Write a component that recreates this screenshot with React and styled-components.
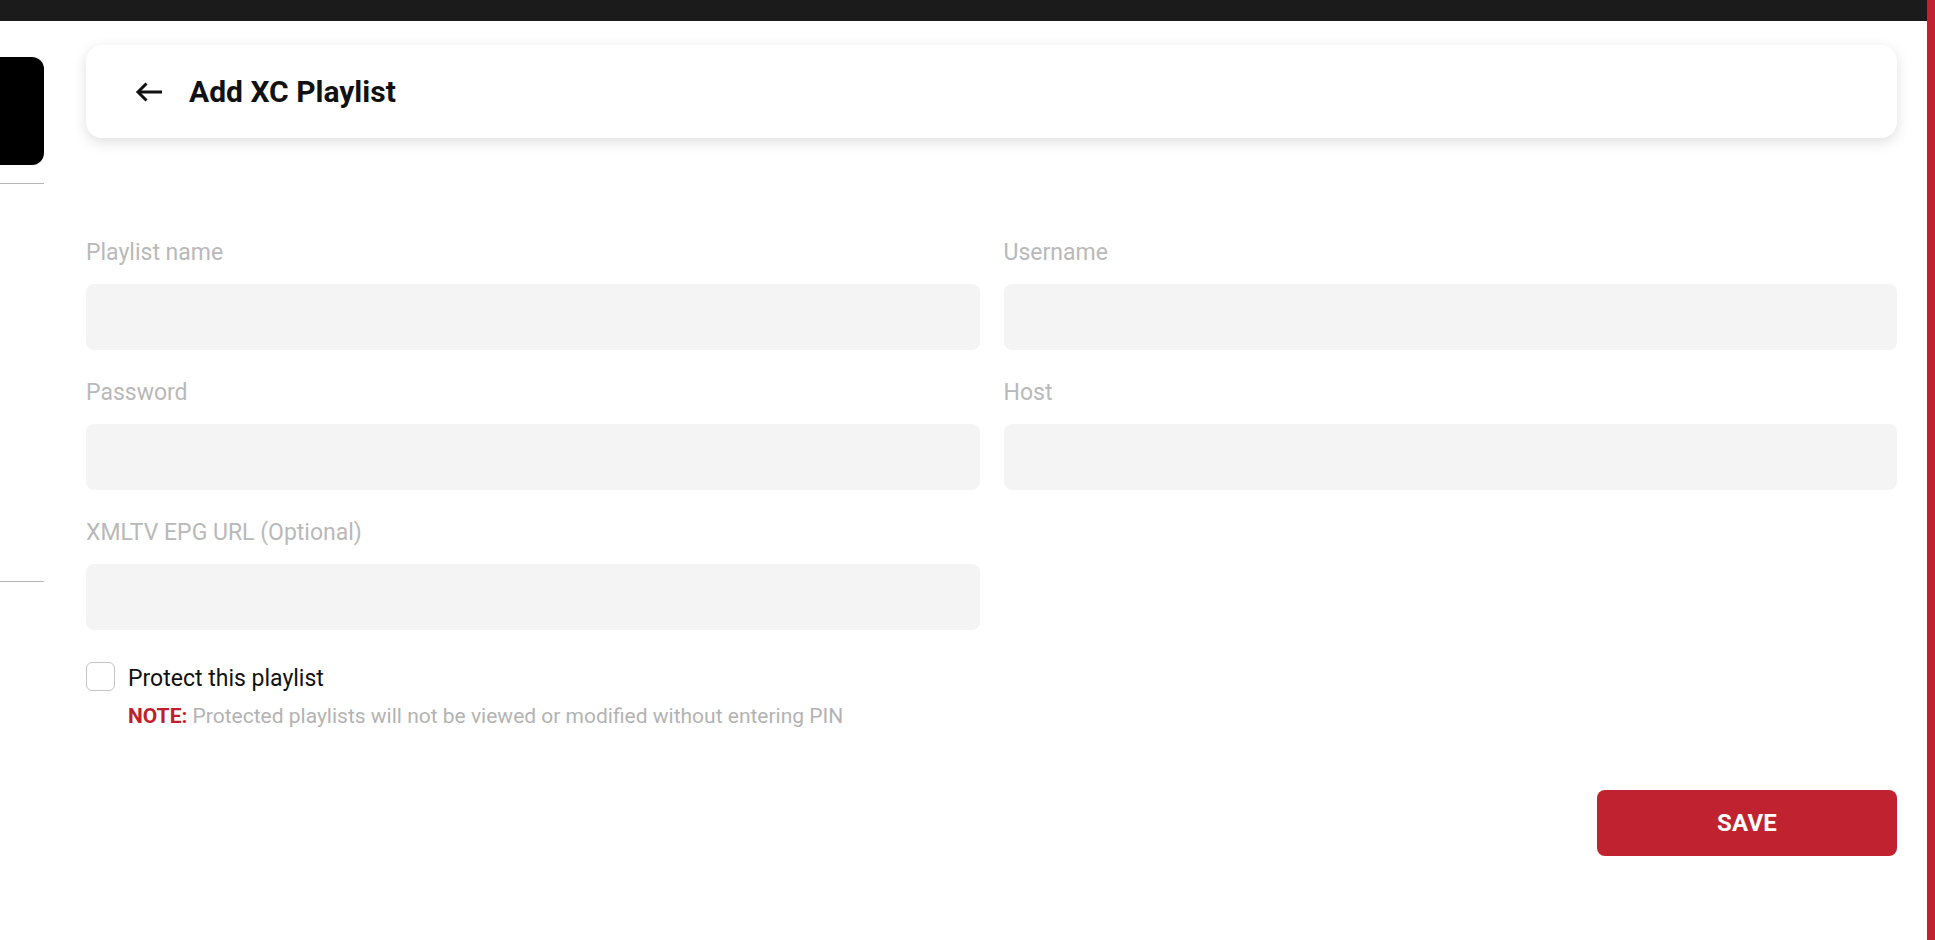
import React from "react";
import styled, { createGlobalStyle } from "styled-components";

const GlobalStyle = createGlobalStyle`
  html, body { margin: 0; padding: 0; background: #ffffff; }
  body { font-family: Roboto, "Liberation Sans", Arial, sans-serif; }
  * { box-sizing: border-box; }
`;

const Page = styled.div`
  display: flex;
  height: 940px;
  width: 1935px;
  overflow: hidden;
`;

const Main = styled.div`
  flex: 1;
  display: flex;
  flex-direction: column;
  min-width: 0;
`;

const RedEdge = styled.div`
  width: 8px;
  flex-shrink: 0;
  background: #c0232f;
`;

const TopBar = styled.div`
  height: 21px;
  flex-shrink: 0;
  background: #1b1b1b;
`;

const Body = styled.div`
  flex: 1;
  display: flex;
  gap: 42px;
  padding-right: 30px;
`;

const Sidebar = styled.aside`
  width: 44px;
  flex-shrink: 0;
  padding-top: 36px;
  display: flex;
  flex-direction: column;
`;

const SideBlock = styled.div`
  height: 108px;
  background: #000;
  border-radius: 0 12px 12px 0;
`;

const SideRule = styled.div`
  height: 1px;
  background: #b5b5b5;
  margin-top: ${(p) => p.$gap}px;
`;

const Content = styled.main`
  flex: 1;
  min-width: 0;
  padding-top: 24px;
  display: flex;
  flex-direction: column;
`;

const HeaderCard = styled.header`
  height: 93px;
  background: #fff;
  border-radius: 16px;
  box-shadow: 0 4px 14px rgba(0, 0, 0, 0.13);
  display: flex;
  align-items: center;
  padding-left: 49px;
  gap: 26px;
`;

const BackButton = styled.button`
  border: 0;
  background: none;
  padding: 0;
  display: flex;
  cursor: pointer;
  color: #111;
`;

const Title = styled.h1`
  margin: 0;
  font-size: 30px;
  font-weight: 700;
  color: #111;
  line-height: 36px;
`;

const Form = styled.form`
  margin-top: 102px;
  display: flex;
  flex-direction: column;
`;

const Grid = styled.div`
  display: grid;
  grid-template-columns: 1fr 1fr;
  column-gap: 24px;
  row-gap: 30px;
`;

const Field = styled.label`
  display: flex;
  flex-direction: column;
`;

const FieldLabel = styled.span`
  font-size: 23px;
  line-height: 26px;
  color: #b9b9b9;
  margin-bottom: 18px;
`;

const Input = styled.input`
  height: 66px;
  border: 0;
  border-radius: 8px;
  background: #f4f4f4;
  padding: 0 18px;
  font-size: 20px;
  font-family: inherit;
  outline: none;
`;

const CheckRow = styled.label`
  margin-top: 31px;
  display: flex;
  align-items: center;
  gap: 13px;
  cursor: pointer;
`;

const CheckBox = styled.span`
  width: 29px;
  height: 29px;
  border: 1px solid #c4c4c4;
  border-radius: 6px;
  background: #fff;
  flex-shrink: 0;
`;

const CheckText = styled.span`
  font-size: 23px;
  line-height: 26px;
  color: #111;
  padding-top: 5px;
`;

const Note = styled.p`
  margin: 12px 0 0 42px;
  font-size: 21px;
  line-height: 24px;
  color: #b3b3b3;
`;

const NoteTag = styled.strong`
  color: #c0202e;
  font-weight: 700;
`;

const Actions = styled.div`
  margin-top: 62px;
  display: flex;
  justify-content: flex-end;
`;

const SaveButton = styled.button`
  width: 300px;
  height: 66px;
  border: 0;
  border-radius: 8px;
  background: #c0232f;
  color: #fff;
  font-family: inherit;
  font-size: 24px;
  font-weight: 700;
  letter-spacing: 0.2px;
  cursor: pointer;
`;

const BackArrow = () => (
  <svg width="28" height="20" viewBox="0 0 28 20" fill="none">
    <path d="M27 10H3" stroke="currentColor" strokeWidth="3" />
    <path d="M11.5 1.5L3 10L11.5 18.5" stroke="currentColor" strokeWidth="3" />
  </svg>
);

const fields = [
  "Playlist name",
  "Username",
  "Password",
  "Host",
  "XMLTV EPG URL (Optional)",
];

export default function App() {
  return (
    <>
      <GlobalStyle />
      <Page>
        <Main>
          <TopBar />
          <Body>
            <Sidebar>
              <SideBlock />
              <SideRule $gap={18} />
              <SideRule $gap={397} />
            </Sidebar>
            <Content>
              <HeaderCard>
                <BackButton type="button" aria-label="Back">
                  <BackArrow />
                </BackButton>
                <Title>Add XC Playlist</Title>
              </HeaderCard>
              <Form onSubmit={(e) => e.preventDefault()}>
                <Grid>
                  {fields.map((f) => (
                    <Field key={f}>
                      <FieldLabel>{f}</FieldLabel>
                      <Input type={f === "Password" ? "password" : "text"} />
                    </Field>
                  ))}
                </Grid>
                <CheckRow>
                  <CheckBox />
                  <CheckText>Protect this playlist</CheckText>
                </CheckRow>
                <Note>
                  <NoteTag>NOTE:</NoteTag> Protected playlists will not be viewed
                  or modified without entering PIN
                </Note>
                <Actions>
                  <SaveButton type="submit">SAVE</SaveButton>
                </Actions>
              </Form>
            </Content>
          </Body>
        </Main>
        <RedEdge />
      </Page>
    </>
  );
}
